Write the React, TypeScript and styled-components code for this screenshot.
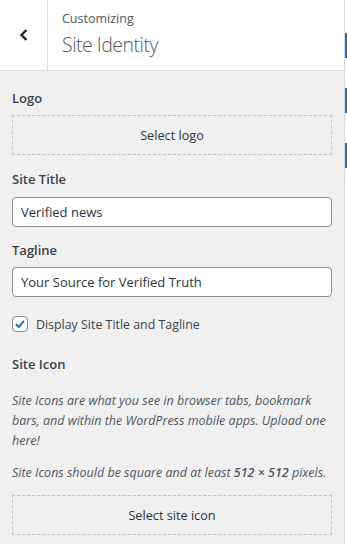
import React from "react";
import styled, { createGlobalStyle } from "styled-components";

const Global = createGlobalStyle`
  html, body { margin: 0; padding: 0; background: #ffffff; }
  body { font-family: "Open Sans", "Noto Sans", Arial, sans-serif; color: #1d2327; }
  * { box-sizing: border-box; }
`;

const Page = styled.div`
  display: flex;
  width: 347px;
  height: 544px;
  overflow: hidden;
`;

const Panel = styled.div`
  width: 345px;
  flex: none;
  background: #f0f0f1;
  border-right: 1px solid #dcdcde;
  display: flex;
  flex-direction: column;
`;

const Preview = styled.div`
  flex: 1;
  background: #ffffff;
  display: flex;
  flex-direction: column;
  padding-top: 33px;
  gap: 30px;
`;

const PreviewMark = styled.div`
  width: 2px;
  height: 25px;
  background: #2271b1;
`;

const Header = styled.div`
  height: 71px;
  flex: none;
  background: #ffffff;
  border-bottom: 1px solid #dcdcde;
  display: flex;
`;

const BackButton = styled.button`
  width: 48px;
  height: 70px;
  border: none;
  border-right: 1px solid #dcdcde;
  background: #ffffff;
  display: flex;
  align-items: center;
  justify-content: center;
  padding: 0;
  color: #1d2327;
`;

const TitleBlock = styled.div`
  padding: 9px 0 0 14px;
  display: flex;
  flex-direction: column;
`;

const Kicker = styled.span`
  font-size: 12.5px;
  line-height: 20px;
  color: #50575e;
`;

const SectionTitle = styled.h3`
  margin: 3px 0 0 0;
  font-size: 19.5px;
  font-weight: 300;
  line-height: 26px;
  letter-spacing: -0.5px;
  color: #50575e;
`;

const Body = styled.div`
  padding: 17px 12px 0 12px;
  display: flex;
  flex-direction: column;
`;

const Label = styled.div<{ $mt?: number }>`
  font-size: 13px;
  font-weight: 600;
  line-height: 20px;
  color: #3c434a;
  margin-top: ${(p) => p.$mt ?? 0}px;
`;

const DashedButton = styled.button<{ $mt?: number }>`
  width: 100%;
  height: 40px;
  border: 1px dashed #c3c4c7;
  background: transparent;
  font-family: inherit;
  font-size: 12.7px;
  color: #2c3338;
  margin-top: ${(p) => p.$mt ?? 0}px;
  padding: 0;
`;

const Input = styled.input<{ $mt?: number }>`
  width: 100%;
  height: 30px;
  border: 1px solid #8c8f94;
  border-radius: 4px;
  background: #ffffff;
  padding: 0 8px;
  font-family: inherit;
  font-size: 13px;
  color: #2c3338;
  margin-top: ${(p) => p.$mt ?? 0}px;
`;

const CheckRow = styled.label`
  display: flex;
  align-items: center;
  gap: 8px;
  height: 16px;
  margin-top: 19px;
  font-size: 12.4px;
  color: #3c434a;
`;

const Box = styled.span`
  width: 16px;
  height: 16px;
  border: 1px solid #8c8f94;
  border-radius: 4px;
  background: #ffffff;
  display: flex;
  align-items: center;
  justify-content: center;
`;

const Description = styled.p<{ $mt?: number }>`
  margin: ${(p) => p.$mt ?? 0}px 0 0 0;
  font-size: 12.5px;
  font-style: italic;
  line-height: 20px;
  color: #50575e;

  strong {
    font-weight: 600;
  }
`;

export default function App() {
  return (
    <>
      <Global />
      <Page>
        <Panel>
          <Header>
            <BackButton aria-label="Back">
              <svg width="12" height="14" viewBox="0 0 12 14">
                <path d="M8.5 2 L3.5 7 L8.5 12" fill="none" stroke="#1d2327" strokeWidth="2.4" />
              </svg>
            </BackButton>
            <TitleBlock>
              <Kicker>Customizing</Kicker>
              <SectionTitle>Site Identity</SectionTitle>
            </TitleBlock>
          </Header>
          <Body>
            <Label>Logo</Label>
            <DashedButton $mt={7}>Select logo</DashedButton>
            <Label $mt={14}>Site Title</Label>
            <Input $mt={8} defaultValue="Verified news" />
            <Label $mt={13}>Tagline</Label>
            <Input $mt={7} defaultValue="Your Source for Verified Truth" />
            <CheckRow>
              <Box>
                <svg width="14" height="14" viewBox="0 0 14 14">
                  <path d="M3 7.2 L5.8 10 L11 3.8" fill="none" stroke="#2271b1" strokeWidth="2" />
                </svg>
              </Box>
              Display Site Title and Tagline
            </CheckRow>
            <Label $mt={22}>Site Icon</Label>
            <Description $mt={17}>
              Site Icons are what you see in browser tabs, bookmark bars, and within the WordPress mobile apps. Upload one here!
            </Description>
            <Description $mt={12}>
              Site Icons should be square and at least <strong>512 × 512</strong> pixels.
            </Description>
            <DashedButton $mt={12}>Select site icon</DashedButton>
          </Body>
        </Panel>
        <Preview>
          <PreviewMark />
          <PreviewMark />
          <PreviewMark />
        </Preview>
      </Page>
    </>
  );
}
